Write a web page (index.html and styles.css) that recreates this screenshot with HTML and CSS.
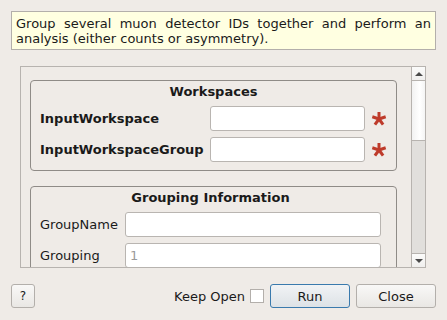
FILE: index.html
```html
<!DOCTYPE html>
<html lang="en">
<head>
    <meta charset="UTF-8">
    <title>MuonGroupDetectors</title>
    <link rel="stylesheet" href="styles.css">
</head>
<body>
    <div class="dialog">
        <p class="description">Group several muon detector IDs together and perform an analysis (either counts or asymmetry).</p>

        <div class="scroll-area">
            <div class="scroll-content">
                <div class="group-box workspaces">
                    <h3 class="group-title">Workspaces</h3>
                    <label class="prop-label bold">InputWorkspace</label>
                    <input class="prop-input" type="text">
                    <span class="required">
                        <svg width="16" height="16" viewBox="0 0 16 16"><g stroke="#be3b2b" stroke-width="3" stroke-linecap="butt"><line x1="8" y1="8" x2="8" y2="1"/><line x1="8" y1="8" x2="14.7" y2="5.8"/><line x1="8" y1="8" x2="12.1" y2="13.7"/><line x1="8" y1="8" x2="3.9" y2="13.7"/><line x1="8" y1="8" x2="1.3" y2="5.8"/></g></svg>
                    </span>
                    <label class="prop-label bold">InputWorkspaceGroup</label>
                    <input class="prop-input" type="text">
                    <span class="required">
                        <svg width="16" height="16" viewBox="0 0 16 16"><g stroke="#be3b2b" stroke-width="3" stroke-linecap="butt"><line x1="8" y1="8" x2="8" y2="1"/><line x1="8" y1="8" x2="14.7" y2="5.8"/><line x1="8" y1="8" x2="12.1" y2="13.7"/><line x1="8" y1="8" x2="3.9" y2="13.7"/><line x1="8" y1="8" x2="1.3" y2="5.8"/></g></svg>
                    </span>
                </div>

                <div class="group-box grouping">
                    <h3 class="group-title">Grouping Information</h3>
                    <label class="prop-label">GroupName</label>
                    <input class="prop-input" type="text">
                    <label class="prop-label">Grouping</label>
                    <input class="prop-input" type="text" placeholder="1">
                </div>
            </div>
            <div class="scrollbar">
                <div class="scroll-btn up"><span class="arrow-up"></span></div>
                <div class="scroll-handle"></div>
                <div class="scroll-trough"></div>
                <div class="scroll-btn down"><span class="arrow-down"></span></div>
            </div>
        </div>

        <div class="button-row">
            <button class="btn help">?</button>
            <div class="spacer"></div>
            <label class="keep-open">Keep Open <span class="check"></span></label>
            <button class="btn run">Run</button>
            <button class="btn close">Close</button>
        </div>
    </div>
</body>
</html>
```

FILE: styles.css
```css
body {
    margin: 0;
    background-color: #efebe7;
    font-family: 'DejaVu Sans', sans-serif;
    font-size: 13px;
    color: #1a1a1a;
}

.dialog {
    padding: 11px;
    height: 298px;
    overflow: hidden;
}

.description {
    margin: 0;
    padding: 4px 4px 3px;
    border: 1px solid #b3afab;
    background-color: #ffffe1;
    line-height: 15px;
    text-align: justify;
}

.scroll-area {
    display: flex;
    margin: 16px 10px 0 9px;
    height: 200px;
    border: 1px solid #b7b3af;
}

.scroll-content {
    flex: 1;
    overflow: hidden;
    padding: 13px 14px 0 9px;
}

.group-box {
    display: grid;
    align-items: center;
    row-gap: 6px;
    padding: 2px 10px 8px 9px;
    border: 1px solid #8f8b87;
    border-radius: 4px;
}

.group-box.workspaces {
    grid-template-columns: 170px 155px 1fr;
    margin-bottom: 15px;
}

.group-box.grouping {
    grid-template-columns: 85px 256px;
    padding-bottom: 20px;
}

.group-title {
    grid-column: 1 / -1;
    margin: 0;
    font-size: 13px;
    font-weight: bold;
    line-height: 17px;
    text-align: center;
}

.prop-label {
    white-space: nowrap;
}

.prop-label.bold {
    font-weight: bold;
}

.prop-input {
    box-sizing: border-box;
    height: 25px;
    width: 100%;
    margin: 0;
    padding: 0 4px;
    border: 1px solid #b9b5b1;
    border-radius: 3px;
    background: white;
    font-family: 'DejaVu Sans', sans-serif;
    font-size: 13px;
}

.prop-input::placeholder {
    color: #9a9a9a;
}

.required {
    display: flex;
    padding-left: 6px;
}

.scrollbar {
    display: flex;
    flex-direction: column;
    width: 13px;
    border-left: 1px solid #b7b3af;
}

.scroll-btn {
    height: 13px;
    display: flex;
    align-items: center;
    justify-content: center;
    background: linear-gradient(#fbfbfa, #f0efee);
}

.scroll-btn.up {
    border-bottom: 1px solid #b7b3af;
}

.scroll-btn.down {
    border-top: 1px solid #b7b3af;
}

.arrow-up {
    border-left: 4px solid transparent;
    border-right: 4px solid transparent;
    border-bottom: 4px solid #4a4a4a;
}

.arrow-down {
    border-left: 4px solid transparent;
    border-right: 4px solid transparent;
    border-top: 4px solid #4a4a4a;
}

.scroll-handle {
    height: 59px;
    border-bottom: 1px solid #b7b3af;
    background: linear-gradient(to right, #f2f2f2, #ffffff 60%, #f4f4f4);
}

.scroll-trough {
    flex: 1;
    background-color: #e1dfdc;
}

.button-row {
    display: flex;
    align-items: center;
    margin-top: 16px;
    height: 24px;
}

.spacer {
    flex: 1;
}

.btn {
    box-sizing: border-box;
    height: 24px;
    width: 80px;
    padding: 0;
    border: 1px solid #b3afab;
    border-radius: 3px;
    background: linear-gradient(#f9f8f7, #e9e7e4);
    font-family: 'DejaVu Sans', sans-serif;
    font-size: 13px;
    color: #1a1a1a;
}

.btn.help {
    width: 24px;
    font-size: 12px;
}

.btn.run {
    margin-left: 6px;
    border-color: #3a7aad;
    background: linear-gradient(#f1f3f5, #dde2e6);
}

.btn.close {
    margin-left: 6px;
}

.keep-open {
    display: flex;
    align-items: center;
    gap: 5px;
}

.check {
    display: inline-block;
    width: 12px;
    height: 12px;
    border: 1px solid #b3afab;
    background: white;
}
```
